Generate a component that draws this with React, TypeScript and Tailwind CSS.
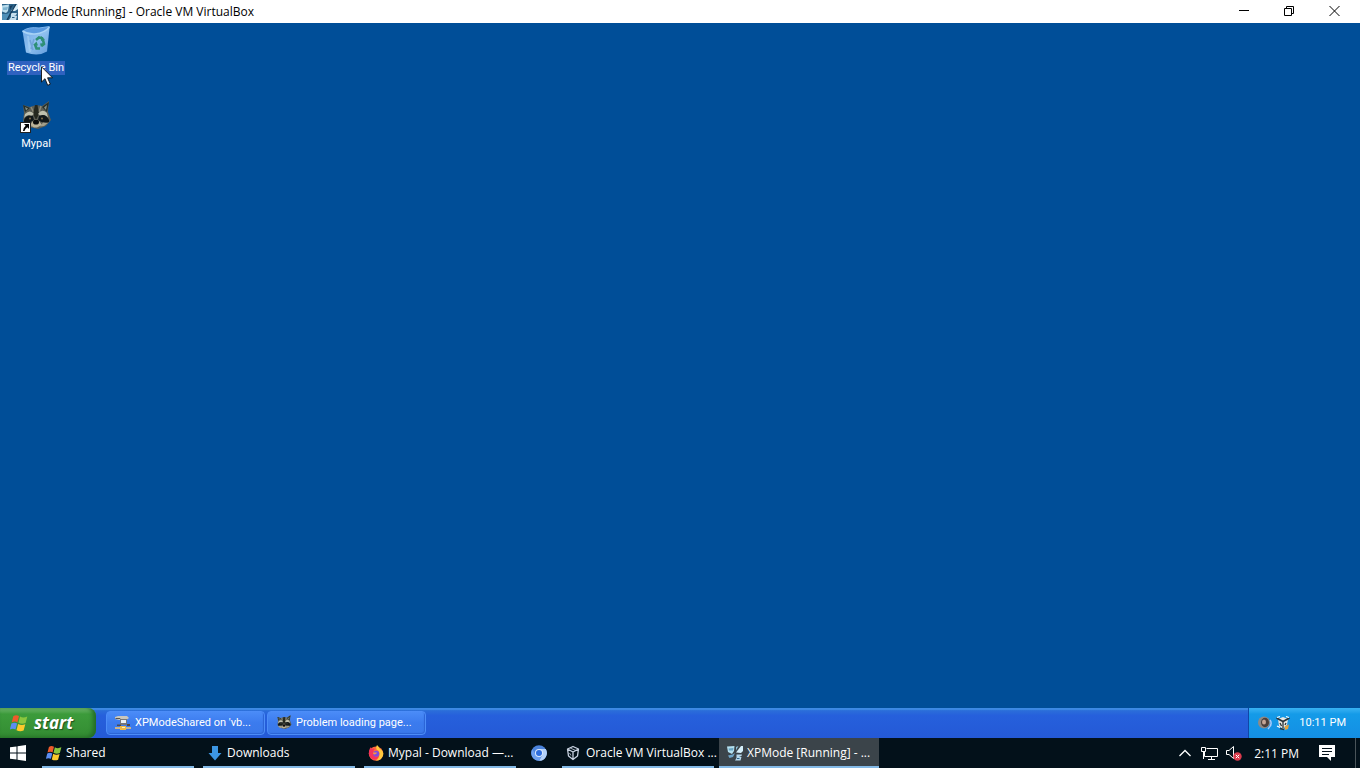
import type { ReactNode } from 'react'

const UI = "font-['Open_Sans','Noto_Sans',sans-serif]"
const XP = "font-['Roboto','Noto_Sans',sans-serif]"

function VmIcon() {
  return (
    <svg viewBox="0 0 16 16" className="size-4 shrink-0" aria-hidden="true">
      <rect width="16" height="16" fill="#2c6389" />
      <path d="M0 1.5L7 0.5L6 7L4 9L0 7.500Z" fill="#b9dcec" />
      <path d="M1 3.500L6 3L5 6L1 6Z" fill="#7fb4d0" />
      <path d="M9 7L15 0H16V5L13 7Z" fill="#d8eef8" />
      <path d="M8 2L11 1L8 6Z" fill="#173c5c" />
      <path d="M0 10L5 10L8 8L5 16H0Z" fill="#4e8fb7" />
      <path d="M9 9H15L14 11L12 11L15 12L14 16H7L9 13Z" fill="#c4deed" />
      <path d="M10 13.500H12.500" stroke="#2c6389" />
      <path d="M5 16L14 0" stroke="#173c5c" strokeWidth="1.200" />
    </svg>
  )
}

function VmTaskIcon() {
  return (
    <svg viewBox="0 0 16 16" className="size-4 shrink-0" aria-hidden="true">
      <path d="M0 1.500L7.500 1L7 6L5 9L1 7Z" fill="#b4e0ef" />
      <path d="M1.500 3.500L6.500 3L6 5.500L2 5.500Z" fill="#6aa6c4" />
      <path d="M9 7.500L14 1H16V6L14 8Z" fill="#d5effa" />
      <path d="M9 2L11.500 1L9 5.500Z" fill="#8ebfd6" />
      <path d="M1 10.500L5.500 9.500L8 8L6 12L2.500 13Z" fill="#6fa5c8" />
      <path d="M9.500 9.500H15L14.500 11H12L14.500 12L13.500 15.500H8L9.500 13Z" fill="#b6d8ec" />
      <path d="M10 13.500H12.500" stroke="#2c6389" />
    </svg>
  )
}

function XpFlag({ className }: { className: string }) {
  return (
    <svg viewBox="0 0 18 18" className={className} aria-hidden="true">
      <path d="M3.300 2.200Q6 0.300 9 2L7.400 8.400Q5 6.800 1.700 8.400Z" fill="#ee5a2b" />
      <path d="M10 2.500Q13 4.500 17.300 2.600L15.600 9Q12 10.600 8.400 8.800Z" fill="#8bc63e" />
      <path d="M1.400 9.500Q4.500 7.800 7.100 9.500L5.500 15.600Q3 14 -0.100 15.500Z" fill="#5b8df2" />
      <path d="M8.100 9.900Q11.500 11.700 15.300 10.200L13.600 16.500Q10 18 6.500 16.200Z" fill="#fcc92c" />
    </svg>
  )
}

function RecycleBin() {
  return (
    <svg viewBox="0 0 32 32" className="size-8 shrink-0" aria-hidden="true">
      <defs>
        <linearGradient id="bin" x1="0" x2="1" y1="0" y2="1">
          <stop offset="0" stopColor="#6fa8e6" />
          <stop offset="0.500" stopColor="#8fc0ef" />
          <stop offset="1" stopColor="#5f9bdc" />
        </linearGradient>
      </defs>
      <path d="M2.500 6L29.500 3L27 26.500Q18 32 6 27.500Z" fill="url(#bin)" />
      <path d="M2.500 6Q9 1.500 19 3L29.500 1.500Q27 8 15 9Q6 9 2.500 6Z" fill="#5a9ae0" />
      <path d="M2.500 6Q8 9.500 15 9Q25 8 29.500 2" fill="none" stroke="#a9d3f6" strokeWidth="1.500" />
      <path d="M2.500 6Q9 1.500 19 3L29.500 1.500" fill="none" stroke="#7db6ee" strokeWidth="1" />
      <path d="M8 11L10 27" stroke="#b9def8" strokeWidth="2" opacity=".4" />
      <path d="M10 15L13 25M14 14L11 24" stroke="#5f93cf" strokeWidth="1.500" opacity=".6" />
      <path d="M16 15L19 12.500L23 13.500M23 15L24 19L21.500 21M20 23.500H16.500L15 19.500" fill="none" stroke="#2e8f76" strokeWidth="2.600" />
      <path d="M21 11L25 14.500L21 16ZM25 18L21 22L20 18.500ZM13 20L16.500 16.500L18 20.500Z" fill="#2e8f76" />
    </svg>
  )
}

function Raccoon({ className }: { className: string }) {
  return (
    <svg viewBox="0 0 32 32" className={className} aria-hidden="true">
      <path d="M3 4L10 6Q16 3 22 5L29 0L28 11L31 19L26 25L18 28L9 26L3 20L4 12Z" fill="#5b5d54" />
      <path d="M3 4L10 7L5 11ZM29 1L22 6L27 11Z" fill="#23302c" />
      <path d="M5 6L8 7.500L6 9.500ZM27 4L24 6.500L26 9Z" fill="#8b8f80" />
      <path d="M11 6L14 12M21 5L19 11" stroke="#8c8a78" strokeWidth="1.500" />
      <path d="M15 4H17.500L19 13L16 19L13 13Z" fill="#25281f" />
      <path d="M5 13Q10 8 14 13L11 15Q7 13 4 17ZM27 12Q22 7 18 13L21 15Q25 13 28 17Z" fill="#bfc0ae" />
      <path d="M4 19Q6 13 13 15L14 19Q9 23 4 21ZM29 19Q26 12 19 15L18 19Q23 23 29 21Z" fill="#11181a" />
      <path d="M13 20L16 18L19 20L22 24L17 26.500H14L10 24Z" fill="#bbb298" />
      <path d="M4 22L9 21.500L12 25.500L8 26ZM28 22L23 21.500L20 25.500L24 25Z" fill="#a29f8b" />
      <ellipse cx="16" cy="21" rx="3" ry="2.600" fill="#0b0c0c" />
      <circle cx="10" cy="17.500" r="0.900" fill="#8d7650" />
      <circle cx="22" cy="17.500" r="0.900" fill="#8d7650" />
    </svg>
  )
}

function NetworkDrive() {
  return (
    <svg viewBox="0 0 16 16" className="size-4 shrink-0" aria-hidden="true">
      <path d="M0 2L3 1H12L14 3L11 5H4L0 4Z" fill="#c9c6bd" />
      <path d="M0.500 3.500H5L7 5.500H11" stroke="#5b5750" fill="none" />
      <path d="M5 4H12V10H5Z" fill="#77777a" />
      <path d="M6 5H11V8H6Z" fill="#eef1f4" />
      <path d="M2 9.500H6V11H2ZM12 9H15V11H12Z" fill="#4c4a50" />
      <path d="M0 12H5V14H0ZM11 12H16V14H11Z" fill="#c7b48f" />
      <path d="M5 11H11V15H5Z" fill="#f0b843" />
      <path d="M7 12H10V13H7Z" fill="#fff0b2" />
    </svg>
  )
}

function Firefox() {
  return (
    <svg viewBox="0 0 16 16" className="size-4 shrink-0" aria-hidden="true">
      <circle cx="8" cy="8.600" r="7.200" fill="#ff6a3a" />
      <path d="M9 0Q11 1.500 11.500 3.500Q16 6 15.200 10Q14 15.500 8 15.800Q12 12 11.500 8Q11 5 8.500 4.500Q7.500 2 9 0Z" fill="#ffc83d" />
      <path d="M1 6Q1.500 3.500 3 2L3.500 4Q5 3 7 4Q5 5 5.500 7L8.500 8Q8 10 5.500 10Q7.500 13 11 11Q9 15.500 5 14.500Q0 12 1 6Z" fill="#f5325b" />
      <circle cx="8.200" cy="8.700" r="3" fill="#7c4ce0" />
      <path d="M5 7.500L9 7.500Q8.500 9.500 6 9.600Q4.800 9 5 7.500Z" fill="#ff943c" />
    </svg>
  )
}

function Chromium() {
  return (
    <svg viewBox="0 0 16 16" className="size-4 shrink-0" aria-hidden="true">
      <circle cx="8" cy="8" r="7.800" fill="#4b83dc" />
      <path d="M8 4H14.800A7.800 7.800 0 0 1 8 15.800L11.500 10Z" fill="#b4d2fa" />
      <path d="M1.200 4.200A7.800 7.800 0 0 0 8 15.800L11 10H5Z" fill="#6c9ff0" />
      <circle cx="8" cy="8" r="4" fill="#dbe9fd" />
      <circle cx="8" cy="8" r="3" fill="#2e6ddd" />
    </svg>
  )
}

function Cube() {
  return (
    <svg viewBox="0 0 16 16" className="size-4 shrink-0" fill="none" stroke="#c9d3e2" strokeWidth="1.300" strokeLinejoin="round" aria-hidden="true">
      <path d="M1.500 4L7 1.500L12.500 4L11.500 11L7 14.500L2.500 11ZM1.500 4L7 7L12.500 4M7 7V14.500" />
      <path d="M4.200 3L9.800 5.500M3.500 8L5 10.500" strokeWidth="0.800" />
    </svg>
  )
}

function DownArrow() {
  return (
    <svg viewBox="0 0 16 16" className="size-4 shrink-0" aria-hidden="true">
      <path d="M5 1H11V8H14.500L8 15.500L1.500 8H5Z" fill="#3c96e4" />
    </svg>
  )
}

function DesktopItem({ label, selected, children }: { label: string; selected?: boolean; children: ReactNode }) {
  return (
    <button className="flex h-19 w-18 flex-col items-center">
      {children}
      <span className={selected ? 'mt-1 bg-[#2f62c0] px-px' : 'mt-1 px-px'}>{label}</span>
    </button>
  )
}

function XpTask({ label, children }: { label: string; children: ReactNode }) {
  return (
    <button className="flex h-6 w-[159px] items-center gap-1 rounded-sm border border-[#4c8df8] bg-linear-to-b from-[#4a8bf7] via-[#3b7bee] to-[#3a78ea] pl-2 shadow-[inset_-1px_-1px_1px_#2c63d4]">
      {children}
      <span className="whitespace-nowrap">{label}</span>
    </button>
  )
}

function HostTask({ label, active, children }: { label: string; active?: boolean; children: ReactNode }) {
  return (
    <button className={active ? 'flex w-40 flex-col bg-[#3b444a]' : 'flex w-40 flex-col px-1'}>
      <span className={active ? 'flex flex-1 items-center gap-1 px-2 pt-px' : 'flex flex-1 items-center gap-1 px-1 pt-px'}>
        {children}
        <span className="whitespace-nowrap">{label}</span>
      </span>
      <span className="h-0.5 w-full bg-[#83b9e6]" />
    </button>
  )
}

export default function App() {
  return (
    <div className="flex h-screen flex-col overflow-hidden bg-[#004e98]">
      <header className={`flex h-[23px] shrink-0 items-center bg-white pr-[3px] pl-0.5 text-[12px] text-black ${UI}`}>
        <VmIcon />
        <h1 className="ml-1 flex-1 whitespace-nowrap">XPMode [Running] - Oracle VM VirtualBox</h1>
        <button aria-label="Minimize" className="flex h-full w-[45px] items-center justify-center">
          <svg viewBox="0 0 11 11" className="size-[11px]"><path d="M0 4.500H10" stroke="#000" /></svg>
        </button>
        <button aria-label="Restore" className="flex h-full w-[45px] items-center justify-center">
          <svg viewBox="0 0 11 11" className="size-[11px]" fill="none" stroke="#000">
            <path d="M0.500 2.500H7.500V9.500H0.500ZM2.500 2.500V0.500H9.500V7.500H7.500" />
          </svg>
        </button>
        <button aria-label="Close" className="flex h-full w-[45px] items-center justify-center">
          <svg viewBox="0 0 11 11" className="size-[11px]"><path d="M0.500 0L10.500 10M10.500 0L0.500 10" stroke="#000" /></svg>
        </button>
      </header>

      <main className={`relative flex flex-1 flex-col pt-0.5 text-[11px] leading-[14px] text-white ${XP}`}>
        <DesktopItem label="Recycle Bin" selected>
          <RecycleBin />
        </DesktopItem>
        <DesktopItem label="Mypal">
          <span className="relative size-8">
            <Raccoon className="size-8" />
            <svg viewBox="0 0 11 11" className="absolute bottom-0 left-0 size-[11px]" aria-hidden="true">
              <rect x="0.500" y="0.500" width="10" height="10" fill="#fff" stroke="#222" />
              <path d="M4 2H9V7L7.300 5.300Q5 7 4.500 9H3Q2.800 6 5.700 3.700Z" fill="#000" />
            </svg>
          </span>
        </DesktopItem>
        <svg viewBox="0 0 12 20" className="absolute top-[43px] left-[41px] h-5 w-3" aria-hidden="true">
          <path d="M0.500 0.800V16L4 12.700L6.700 19.300L9.300 18.200L6.600 11.800H11.500Z" fill="#fff" stroke="#111" strokeWidth="0.900" />
        </svg>
      </main>

      <nav aria-label="Guest taskbar" className={`flex h-[30px] shrink-0 bg-linear-to-b from-[#2f74d8] via-[#2660dc] via-25% to-[#2459d6] text-[11px] text-white shadow-[inset_0_2px_1px_#3d8ae4] ${XP}`}>
        <button className="flex w-24 items-center gap-1.5 rounded-r-lg bg-linear-to-b from-[#6fb76d] via-[#3c9b3b] via-20% to-[#338c32] pl-2.5 shadow-[inset_-3px_-1px_4px_#236b26]">
          <XpFlag className="size-[18px]" />
          <span className="font-['Open_Sans','Noto_Sans',sans-serif] text-[17px] leading-6 font-bold italic text-shadow-[1px_1px_1px_#1d4f1d]">start</span>
        </button>
        <div className="flex flex-1 items-center gap-0.5 pl-2.5">
          <XpTask label="XPModeShared on 'vb..."><NetworkDrive /></XpTask>
          <XpTask label="Problem loading page..."><Raccoon className="size-4 shrink-0" /></XpTask>
        </div>
        <div className="flex items-center border-l border-[#1046a8] bg-linear-to-b from-[#38b3f3] via-[#149be8] via-20% to-[#148fe4] pr-3.5 pl-2">
          <svg viewBox="0 0 16 16" className="size-4" aria-hidden="true">
            <circle cx="7" cy="7.500" r="6" fill="#8e8a86" />
            <ellipse cx="8" cy="7.500" rx="4" ry="4.700" fill="#4b3f3c" />
            <ellipse cx="7" cy="7" rx="2" ry="2.500" fill="#c4a595" />
            <path d="M13 5Q16 9 11 14" fill="none" stroke="#a8c9fa" strokeWidth="1.500" />
          </svg>
          <svg viewBox="0 0 16 16" className="ml-0.5 size-4" aria-hidden="true">
            <path d="M3 4L8 2L13 4L12 10L8 14L4 11Z" fill="#e8e7e2" />
            <path d="M1.500 3L8 6.500L14.500 3" stroke="#29333a" strokeWidth="1.600" fill="none" />
            <path d="M2 2.500L5 1.500M14 2.500L11 1.500M2 11L5 12.500" stroke="#fff" strokeWidth="1.300" />
            <path d="M8 7V13M5 8L6.500 11M11 8L10 10M5 13.500L9 14.500" stroke="#29333a" strokeWidth="1.300" fill="none" />
            <path d="M9.500 11.500L14 9.500L13 14L10 15Z" fill="#e6a23d" />
          </svg>
          <time className="ml-2 whitespace-nowrap">10:11 PM</time>
        </div>
      </nav>

      <nav aria-label="Host taskbar" className={`flex h-[30px] shrink-0 gap-px bg-[#03111a] text-[12px] text-white ${UI}`}>
        <button aria-label="Start" className="flex w-[37px] items-center justify-center pr-px">
          <svg viewBox="0 0 16 16" className="size-4" fill="#fff">
            <path d="M0 2.300L6.500 1.400V7.500H0ZM7.500 1.200L16 0V7.500H7.500ZM0 8.500H6.500V14.600L0 13.700ZM7.500 8.500H16V16L7.500 14.800Z" />
          </svg>
        </button>
        <HostTask label="Shared"><XpFlag className="size-4 shrink-0" /></HostTask>
        <HostTask label="Downloads"><DownArrow /></HostTask>
        <HostTask label="Mypal - Download —..."><Firefox /></HostTask>
        <button aria-label="Chromium" className="flex w-9 items-center justify-center"><Chromium /></button>
        <HostTask label="Oracle VM VirtualBox ..."><Cube /></HostTask>
        <HostTask label="XPMode [Running] - ..." active><VmTaskIcon /></HostTask>
        <div className="flex flex-1 items-center justify-end">
          <button aria-label="Show hidden icons">
            <svg viewBox="0 0 12 8" className="h-2 w-3"><path d="M0.500 7L6 1.500L11.500 7" fill="none" stroke="#fff" strokeWidth="1.300" /></svg>
          </button>
          <svg viewBox="0 0 17 16" className="ml-2.5 h-4 w-[17px]" fill="none" stroke="#fff" aria-label="Network" role="img">
            <path d="M5.500 3.500H16.500V11.500H3.500V7M10.500 11.500V14M7 14.500H14M0.500 2.500H4.500V6.500H0.500ZM2.500 6.500V14" />
          </svg>
          <svg viewBox="0 0 16 16" className="ml-2 size-4" aria-label="Muted" role="img">
            <path d="M0.500 5.500H3L7.500 1.500V13.500L3 9.500H0.500Z" fill="none" stroke="#fff" />
            <circle cx="11.500" cy="11.500" r="4.200" fill="#db3a4c" />
            <path d="M9.800 9.800L13.200 13.200M13.200 9.800L9.800 13.200" stroke="#fff" />
          </svg>
          <time className="ml-3 pt-px whitespace-nowrap">2:11 PM</time>
          <button aria-label="Notifications" className="ml-5">
            <svg viewBox="0 0 16 16" className="size-4">
              <path d="M0 0H16V12H12V16L8 12H0Z" fill="#fff" />
              <path d="M3 3.500H13M3 6.500H13M3 9.500H10" stroke="#03111a" />
            </svg>
          </button>
          <button aria-label="Show desktop" className="ml-5 h-full w-[5px] border-l border-[#4a5459]" />
        </div>
      </nav>
    </div>
  )
}
